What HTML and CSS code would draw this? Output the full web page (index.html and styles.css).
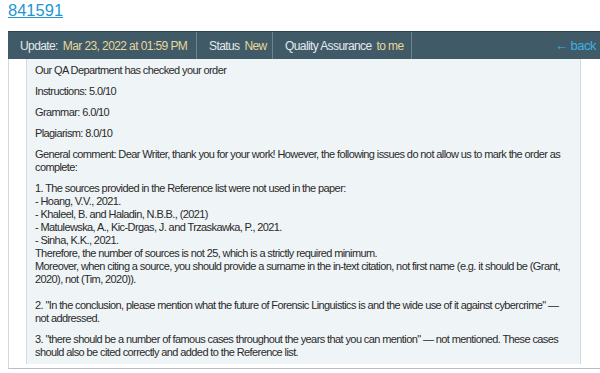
FILE: index.html
```html
<!DOCTYPE html>
<html>
<head>
<meta charset="utf-8">
<link rel="stylesheet" href="styles.css">
</head>
<body>
<h1 class="title"><a href="#" class="title-link">841591</a></h1>
<div class="bar">
  <div class="cell cell-update"><span class="label">Update:</span><span class="value">Mar 23, 2022 at 01:59 PM</span></div>
  <div class="cell cell-status"><span class="label">Status</span><span class="value">New</span></div>
  <div class="cell cell-qa"><span class="label">Quality Assurance</span><span class="value">to me</span></div>
  <div class="cell cell-back"><a href="#" class="back">&larr; back</a></div>
</div>
<div class="outer">
  <div class="panel">
    <p>Our QA Department has checked your order</p>
    <p>Instructions: 5.0/10</p>
    <p>Grammar: 6.0/10</p>
    <p>Plagiarism: 8.0/10</p>
    <p>General comment: Dear Writer, thank you for your work! However, the following issues do not allow us to mark the order as complete:</p>
    <p>1. The sources provided in the Reference list were not used in the paper:<br>
    - Hoang, V.V., 2021.<br>
    - Khaleel, B. and Haladin, N.B.B., (2021)<br>
    - Matulewska, A., Kic-Drgas, J. and Trzaskawka, P., 2021.<br>
    - Sinha, K.K., 2021.<br>
    Therefore, the number of sources is not 25, which is a strictly required minimum.<br>
    Moreover, when citing a source, you should provide a surname in the in-text citation, not first name (e.g. it should be (Grant, 2020), not (Tim, 2020)).<br>
    <br>
    2. "In the conclusion, please mention what the future of Forensic Linguistics is and the wide use of it against cybercrime" — not addressed.</p>
    <p>3. "there should be a number of famous cases throughout the years that you can mention" — not mentioned. These cases should also be cited correctly and added to the Reference list.</p>
  </div>
</div>
</body>
</html>
```
FILE: styles.css
```css
html, body {
  margin: 0;
  padding: 0;
  background: #ffffff;
  overflow: hidden;
}
body {
  padding-left: 8px;
  font-family: "Liberation Sans", Arial, sans-serif;
}
.title {
  margin: 0;
  height: 31px;
  font-size: 16.5px;
  font-weight: normal;
  line-height: 20px;
}
.title-link {
  color: #1f95d2;
  text-decoration: underline;
}
.bar {
  display: flex;
  height: 28px;
  background: #415a68;
  border-top: 1px solid #2f434e;
  box-sizing: border-box;
  width: 592px;
  font-size: 12px;
  letter-spacing: -0.6px;
  align-items: stretch;
}
.cell {
  display: flex;
  align-items: center;
  padding: 0 11px 0 12px;
  border-right: 1px solid #6d8491;
  white-space: nowrap;
  box-sizing: border-box;
}
.cell-update { width: 189px; }
.cell-status { width: 76px; }
.cell-qa { width: 139px; }
.cell-back {
  flex: 1;
  border-right: none;
  justify-content: flex-end;
  padding-right: 4px;
}
.label { color: #e4eaee; }
.value { color: #e6d79a; margin-left: 5px; }
.back {
  color: #3cb2e4;
  text-decoration: none;
  font-size: 13px;
  letter-spacing: -0.5px;
}
.outer {
  width: 592px;
  border-left: 1px solid #d6d9db;
  border-bottom: 1px solid #b9bdbf;
  padding-bottom: 4px;
  box-sizing: border-box;
}
.panel {
  margin-left: 17px;
  width: 555px;
  background: #eff4f6;
  border-left: 1px solid #d3dbdf;
  border-right: 1px solid #d3dbdf;
  padding: 5px 12px 5px 8px;
  box-sizing: border-box;
  font-size: 11px;
  letter-spacing: -0.6px;
  line-height: 13px;
  color: #2a2a2a;
}
.panel p {
  margin: 0 0 8px 0;
}
.panel p:last-child {
  margin-bottom: 0;
}
```
